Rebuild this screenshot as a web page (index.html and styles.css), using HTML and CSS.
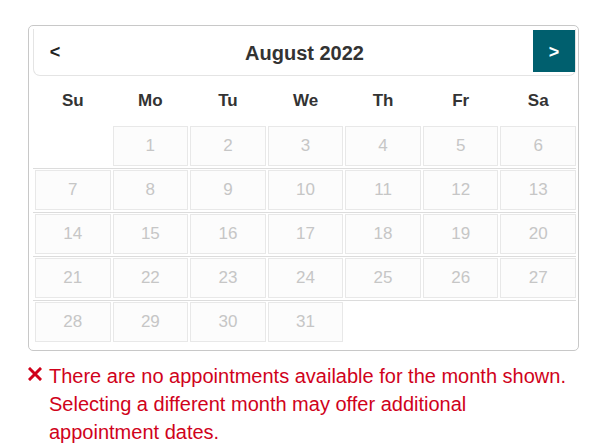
FILE: index.html
```html
<!DOCTYPE html>
<html lang="en">
<head>
    <meta charset="UTF-8">
    <meta name="viewport" content="width=device-width, initial-scale=1.0">
    <title>Appointment Calendar</title>
    <link rel="stylesheet" href="styles.css">
</head>
<body>
    <div class="calendar">
        <div class="cal-header">
            <button class="nav prev">&lt;</button>
            <div class="month-title">August 2022</div>
            <button class="nav next">&gt;</button>
        </div>

        <div class="weekdays">
            <div>Su</div><div>Mo</div><div>Tu</div><div>We</div><div>Th</div><div>Fr</div><div>Sa</div>
        </div>

        <div class="week">
            <div class="empty"></div>
            <div class="day">1</div><div class="day">2</div><div class="day">3</div>
            <div class="day">4</div><div class="day">5</div><div class="day">6</div>
        </div>
        <div class="week">
            <div class="day">7</div><div class="day">8</div><div class="day">9</div><div class="day">10</div>
            <div class="day">11</div><div class="day">12</div><div class="day">13</div>
        </div>
        <div class="week">
            <div class="day">14</div><div class="day">15</div><div class="day">16</div><div class="day">17</div>
            <div class="day">18</div><div class="day">19</div><div class="day">20</div>
        </div>
        <div class="week">
            <div class="day">21</div><div class="day">22</div><div class="day">23</div><div class="day">24</div>
            <div class="day">25</div><div class="day">26</div><div class="day">27</div>
        </div>
        <div class="week">
            <div class="day">28</div><div class="day">29</div><div class="day">30</div><div class="day">31</div>
        </div>
    </div>

    <div class="error">
        <svg class="error-icon" width="14" height="14" viewBox="0 0 14 14">
            <path d="M2 2 L12 12 M12 2 L2 12" stroke="#d0021b" stroke-width="3" stroke-linecap="square"/>
        </svg>
        <p>There are no appointments available for the month shown. Selecting a different month may offer additional appointment dates.</p>
    </div>
</body>
</html>
```

FILE: styles.css
```css
body {
    margin: 0;
    font-family: "Liberation Sans", Arial, sans-serif;
    background: #fff;
}

.calendar {
    width: 543px;
    margin: 25px 0 0 28px;
    padding: 3px 2px 6px 4px;
    border: 1px solid #c8c8c8;
    border-radius: 5px;
    background: #fff;
}

.cal-header {
    display: flex;
    align-items: flex-start;
    justify-content: space-between;
    height: 47px;
    border: 1px solid #e4e4e4;
    border-top: none;
    border-radius: 0 0 7px 7px;
    box-sizing: border-box;
}

.nav {
    width: 42px;
    height: 42px;
    margin-top: 1px;
    padding: 2px 0 0;
    border: none;
    background: transparent;
    font-family: inherit;
    font-size: 18px;
    font-weight: bold;
    color: #222;
    cursor: pointer;
}

.next {
    background-color: #005f6e;
    color: #fff;
}

.month-title {
    align-self: center;
    padding-top: 3px;
    font-size: 20px;
    font-weight: bold;
    color: #333;
}

.weekdays {
    display: grid;
    grid-template-columns: repeat(7, 1fr);
    height: 49px;
    align-items: center;
    text-align: center;
    font-size: 17px;
    font-weight: bold;
    color: #333;
    padding: 1px 0 0 2px;
    box-sizing: border-box;
    column-gap: 2px;
}

.week {
    display: grid;
    grid-template-columns: repeat(7, 1fr);
    column-gap: 2px;
    padding: 1px 0 2px 2px;
}

.week + .week {
    border-top: 1px solid #dcdcdc;
}

.day {
    height: 40px;
    box-sizing: border-box;
    border: 1px solid #e8e8e8;
    background: #fcfcfc;
    color: #c6c6c6;
    font-size: 17px;
    display: flex;
    align-items: center;
    justify-content: center;
}

.error {
    display: flex;
    align-items: flex-start;
    gap: 7px;
    margin: 11px 0 0 28px;
    color: #d0021b;
}

.error-icon {
    flex-shrink: 0;
    margin-top: 5px;
}

.error p {
    margin: 0;
    font-size: 20px;
    line-height: 28px;
    width: 525px;
}
```
